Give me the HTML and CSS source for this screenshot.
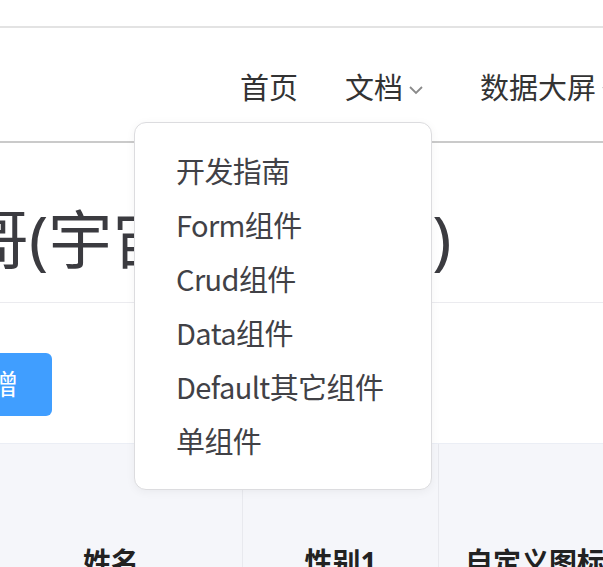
FILE: index.html
```html
<!DOCTYPE html>
<html lang="zh-CN">
<head>
<meta charset="utf-8">
<title>文档</title>
<link rel="stylesheet" href="styles.css">
</head>
<body>
<div class="page">
  <div class="topbar"></div>
  <header class="header">
    <nav class="nav">
      <a class="nav-item">首页</a>
      <a class="nav-item has-menu">文档<svg class="chev" width="16" height="10" viewBox="0 0 16 10"><polyline points="2,2 8,8 14,2" fill="none" stroke="#8a8a8a" stroke-width="1.8"/></svg></a>
      <a class="nav-item has-menu">数据大屏<svg class="chev" width="16" height="10" viewBox="0 0 16 10"><polyline points="2,2 8,8 14,2" fill="none" stroke="#8a8a8a" stroke-width="1.8"/></svg></a>
    </nav>
  </header>
  <section class="title-section">
    <h1 class="title">哥(宇宙最强战神)</h1>
  </section>
  <section class="toolbar">
    <button class="btn-primary">新增</button>
  </section>
  <div class="table-head">
    <div class="th th-name">姓名</div>
    <div class="th th-sex">性别1</div>
    <div class="th th-icon">自定义图标</div>
  </div>
  <ul class="dropdown">
    <li>开发指南</li>
    <li>Form组件</li>
    <li>Crud组件</li>
    <li>Data组件</li>
    <li>Default其它组件</li>
    <li>单组件</li>
  </ul>
</div>
</body>
</html>
```
FILE: styles.css
```css
* { box-sizing: border-box; }
html, body { margin: 0; padding: 0; background: #fff; }
body {
  font-family: "Noto Sans", "Noto Sans CJK SC", sans-serif;
  color: #333;
  overflow: hidden;
}
.page {
  position: relative;
  width: 603px;
  height: 567px;
  overflow: hidden;
}
.topbar {
  height: 28px;
  border-bottom: 2px solid #e3e3e3;
}
.header {
  height: 115px;
  border-bottom: 2px solid #cacaca;
  overflow: hidden;
}
.nav {
  display: flex;
  align-items: center;
  white-space: nowrap;
  padding-left: 240px;
  padding-top: 40px;
}
.nav-item {
  display: flex;
  align-items: center;
  font-size: 29px;
  line-height: 40px;
  color: #333;
  margin-right: 47px;
}
.nav-item.has-menu { margin-right: 56px; }
.chev { margin-left: 5px; margin-top: 4px; }
.title-section {
  height: 160px;
  border-bottom: 1px solid #ebebef;
  padding-top: 56px;
}
.title {
  margin: 0 0 0 -35px;
  font-size: 64px;
  line-height: 80px;
  font-weight: 400;
  color: #3b3b40;
  white-space: nowrap;
}
.toolbar {
  height: 141px;
  padding-top: 50px;
  border-bottom: 1px solid #ebeef5;
}
.btn-primary {
  margin-left: -72px;
  height: 63px;
  padding: 0 34px;
  border: none;
  border-radius: 6px;
  background: #409eff;
  color: #fff;
  font-family: inherit;
  font-size: 28px;
  line-height: 63px;
}
.table-head {
  display: flex;
  height: 200px;
  background: #f5f6fa;
  margin-left: -20px;
}
.th {
  flex-shrink: 0;
  font-size: 28px;
  font-weight: 700;
  color: #222;
  text-align: center;
  padding-top: 98px;
  line-height: 40px;
  border-right: 1px solid #e8e9ee;
  white-space: nowrap;
}
.th-name { width: 263px; }
.th-sex { width: 196px; }
.th-icon { width: 200px; text-align: left; padding-left: 26px; border-right: none; }
.dropdown {
  position: absolute;
  left: 134px;
  top: 122px;
  width: 298px;
  margin: 0;
  padding: 20px 0 22px 41px;
  list-style: none;
  background: #fff;
  border: 1px solid #dcdcdf;
  border-radius: 12px;
  box-shadow: 0 2px 10px rgba(0, 0, 0, 0.05);
}
.dropdown li {
  font-family: "Noto Sans CJK SC", "Noto Sans", sans-serif;
  font-size: 29px;
  line-height: 54px;
  letter-spacing: -0.6px;
  color: #414146;
  white-space: nowrap;
}
```
